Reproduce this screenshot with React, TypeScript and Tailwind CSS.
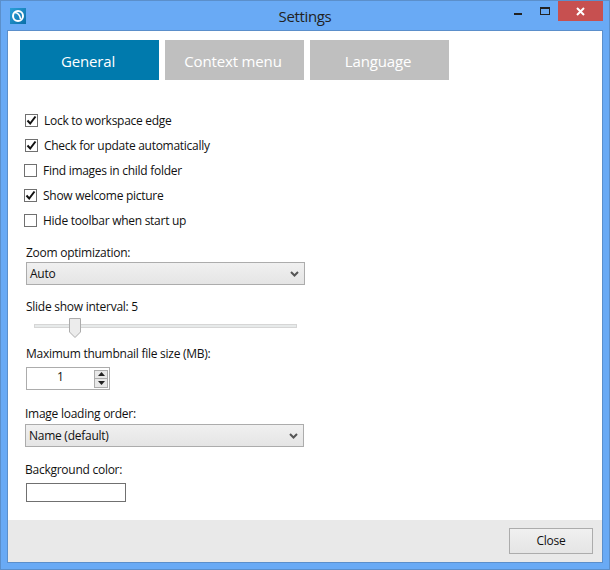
import React from "react";

const font = "font-['Open_Sans','Noto_Sans',sans-serif]";

function Check({ label, checked, indent }: { label: string; checked: boolean; indent: boolean }) {
  return (
    <div className={`flex h-[25px] items-center gap-[6px] ${indent ? "pl-[17px]" : "pl-[16px]"}`}>
      <span className="flex h-[13px] w-[13px] items-center justify-center border border-[#707070] bg-white">
        {checked && (
          <svg width="11" height="11" viewBox="0 0 11 11">
            <path d="M1.5 5.5 L4.2 8.5 L9.5 1.5" fill="none" stroke="#111" strokeWidth="2" />
          </svg>
        )}
      </span>
      <span className="mt-[1px] text-[12px] leading-none tracking-[-0.28px] text-[#111]">{label}</span>
    </div>
  );
}

function Select({ value, className }: { value: string; className: string }) {
  return (
    <div className={`flex h-[23px] w-[279px] items-center justify-between border border-[#acacac] bg-gradient-to-b from-[#f0f0f0] to-[#e5e5e5] pl-[3px] pr-[5px] text-[12px] tracking-[-0.26px] text-[#111] ${className}`}>
      <span>{value}</span>
      <svg width="9" height="6" viewBox="0 0 9 6">
        <path d="M1 1 L4.5 4.5 L8 1" fill="none" stroke="#555" strokeWidth="2" />
      </svg>
    </div>
  );
}

function Label({ text, className }: { text: string; className: string }) {
  return <div className={`h-[16px] text-[12px] leading-[16px] tracking-[-0.26px] text-[#111] ${className}`}>{text}</div>;
}

function Tab({ text, active }: { text: string; active: boolean }) {
  return (
    <div className={`flex h-[40px] w-[139px] items-center justify-center pr-[3px] pt-[2px] text-[15px] tracking-[-0.15px] text-white ${active ? "bg-[#007aad]" : "bg-[#bfbfbf]"}`}>
      {text}
    </div>
  );
}

export default function App() {
  return (
    <div className={`${font} flex h-[570px] w-[610px] flex-col border border-[#5b8fcb] bg-[#69aaf5]`}>
      <div className="relative flex h-[29px] shrink-0 items-center justify-center text-[15px] tracking-[-0.35px] text-[#222]">
        <div className="absolute left-[9px] top-[7px] flex h-[16px] w-[16px] items-center justify-center bg-gradient-to-br from-[#2aa0d8] to-[#0a6fa8]">
          <svg width="14" height="14" viewBox="0 0 14 14">
            <circle cx="7" cy="7" r="5" fill="none" stroke="#fff" strokeWidth="2" />
            <path d="M4 3.5 C7 4 9 6.5 9.5 10" fill="none" stroke="#fff" strokeWidth="1.6" />
          </svg>
        </div>
        <span className="mt-[2px]">Settings</span>
        <div className="absolute right-[6px] top-[0px] flex h-[20px] w-[45px] items-center justify-center bg-[#c75050]">
          <svg width="9" height="9" viewBox="0 0 9 9">
            <path d="M1 1 L8 8 M8 1 L1 8" stroke="#fff" strokeWidth="2" />
          </svg>
        </div>
        <div className="absolute left-[539px] top-[6px] h-[8px] w-[10px] border border-[#222] border-t-[2px]" />
        <div className="absolute left-[513px] top-[12px] h-[2px] w-[8px] bg-[#222]" />
      </div>
      <div className="mx-[6px] mb-[6px] flex flex-1 flex-col border border-[#5b8fcb] bg-white">
        <div className="flex-1">
          <div className="flex gap-[6px] pl-[12px] pt-[9px]">
            <Tab text="General" active />
            <Tab text="Context menu" active={false} />
            <Tab text="Language" active={false} />
          </div>
          <div className="mt-[28px]">
            <Check label="Lock to workspace edge" checked indent />
            <Check label="Check for update automatically" checked indent />
            <Check label="Find images in child folder" checked={false} indent={false} />
            <Check label="Show welcome picture" checked indent={false} />
            <Check label="Hide toolbar when start up" checked={false} indent={false} />
          </div>
          <Label text="Zoom optimization:" className="ml-[18px] mt-[12px]" />
          <Select value="Auto" className="ml-[18px] mt-[1px]" />
          <Label text="Slide show interval: 5" className="ml-[18px] mt-[14px]" />
          <div className="relative ml-[26px] mt-[9px] h-[4px] w-[263px] border border-[#d6d6d6] bg-[#e7eaea]">
            <svg className="absolute left-[34px] top-[-7px]" width="12" height="20" viewBox="0 0 12 20">
              <path d="M0.5 0.5 H11.5 V14 L6 19.5 L0.5 14 Z" fill="#ececec" stroke="#acacac" />
            </svg>
          </div>
          <Label text="Maximum thumbnail file size (MB):" className="ml-[18px] mt-[18px]" />
          <div className="ml-[18px] mt-[5px] flex h-[23px] w-[84px] items-center border border-[#acacac] bg-white pr-[1px] text-[12px] text-[#111]">
            <span className="mb-[3px] flex-1 text-center">1</span>
            <div className="flex h-[18px] w-[14px] flex-col">
              <div className="flex flex-1 items-center justify-center border border-[#acacac] bg-[#e8e8e8]">
                <svg width="7" height="4" viewBox="0 0 7 4"><path d="M3.5 0 L7 4 H0 Z" fill="#222" /></svg>
              </div>
              <div className="flex flex-1 items-center justify-center border border-t-0 border-[#acacac] bg-[#e8e8e8]">
                <svg width="7" height="4" viewBox="0 0 7 4"><path d="M0 0 H7 L3.5 4 Z" fill="#222" /></svg>
              </div>
            </div>
          </div>
          <Label text="Image loading order:" className="ml-[17px] mt-[16px]" />
          <Select value="Name (default)" className="ml-[17px] mt-[2px]" />
          <Label text="Background color:" className="ml-[17px] mt-[15px]" />
          <div className="ml-[18px] mt-[5px] h-[19px] w-[100px] border border-[#707070] bg-white" />
        </div>
        <div className="flex h-[42px] items-start justify-end bg-[#e9e9e9] pr-[9px] pt-[8px]">
          <div className="flex h-[26px] w-[84px] items-center justify-center border border-[#acacac] bg-gradient-to-b from-[#f0f0f0] to-[#e5e5e5] text-[12px] tracking-[-0.26px] text-[#111]">Close</div>
        </div>
      </div>
    </div>
  );
}
